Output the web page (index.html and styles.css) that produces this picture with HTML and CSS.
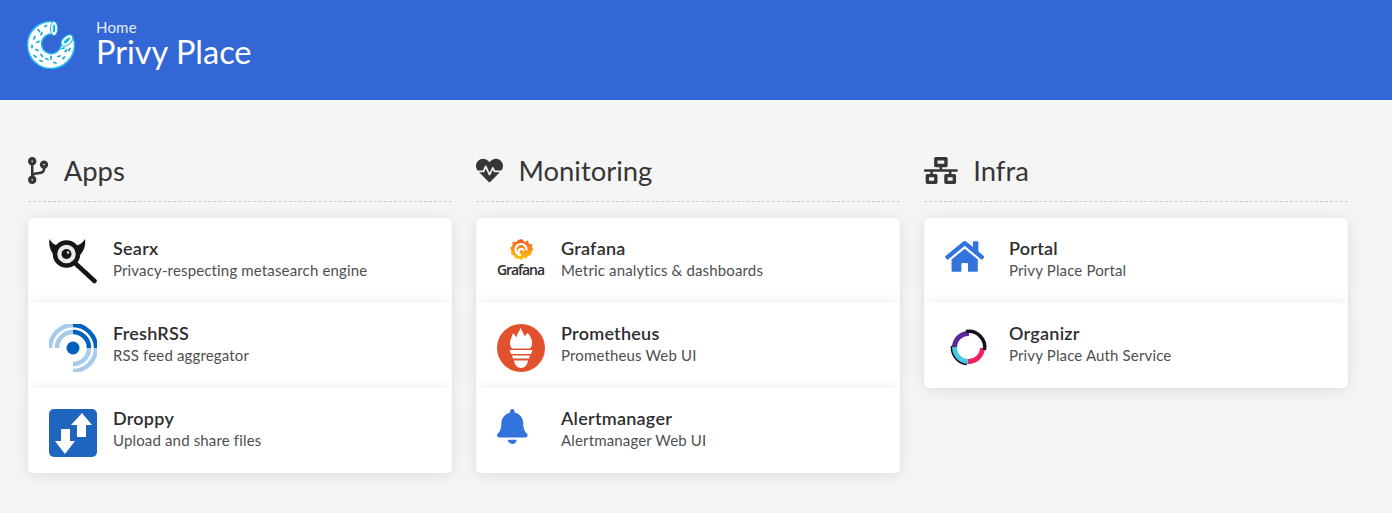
FILE: index.html
```html
<!DOCTYPE html>
<html lang="en">
<head>
<meta charset="utf-8">
<title>Privy Place</title>
<link rel="stylesheet" href="styles.css">
</head>
<body>
<header class="hero">
  <svg class="logo" viewBox="0 0 48 48">
    <path class="donut-body" d="M27 1.200A23.500 23.500 0 1 0 46.500 18L34 25A9.800 9.800 0 1 1 27 14Z"/>
    <ellipse class="donut-end" cx="27" cy="8" rx="3.600" ry="7"/>
    <ellipse class="donut-hole" cx="27" cy="8" rx="1.300" ry="4"/>
    <ellipse class="donut-end" cx="40" cy="20" rx="7" ry="4.200" transform="rotate(-42 40 20)"/>
    <ellipse class="donut-hole" cx="40" cy="20" rx="4" ry="1.600" transform="rotate(-42 40 20)"/>
    <path class="sprinkles" d="M18 6l1.500-1M11 9l1.500 2M15 12l-1 2M8 16l-1 2.500M12 21l-2 1M5 25l0 2M9 29l2 1M7 35l2 1.500M14 34l1.500 2M13 40l2 1M19 38l2 1M24 36l0 2.500M27 42l2 .5M31 36l2-.5M36 38l1.500-1.500M38 31l2-1.500M43 28l-1 2M35 28l2-.5"/>
  </svg>
  <div class="brand">
    <p class="brand-sub">Home</p>
    <h1 class="brand-title">Privy Place</h1>
  </div>
</header>
<main class="board">
  <section class="column">
    <h2 class="group-title">
      <svg class="group-icon" viewBox="0 0 384 512"><path d="M384 144c0-44.2-35.8-80-80-80s-80 35.8-80 80c0 36.4 24.3 67.1 57.5 76.8-.6 16.1-4.2 28.5-11 36.9-15.4 19.2-49.3 22.4-85.2 25.7-28.2 2.6-57.4 5.4-81.3 16.9v-144c32.5-10.2 56-40.5 56-76.3 0-44.2-35.8-80-80-80S0 35.8 0 80c0 35.8 23.5 66.1 56 76.3v199.3C23.5 365.9 0 396.2 0 432c0 44.2 35.8 80 80 80s80-35.8 80-80c0-34-21.2-63.1-51.2-74.6 3.1-5.2 7.8-9.8 14.9-13.4 16.2-8.2 40.4-10.4 66.1-12.8 42.2-3.9 90-8.4 118.2-43.4 14-17.4 21.1-39.8 21.6-67.9 31.6-10.800 54.4-40.7 54.4-75.9zM80 64c8.8 0 16 7.2 16 16s-7.2 16-16 16-16-7.2-16-16 7.2-16 16-16zm0 384c-8.8 0-16-7.2-16-16s7.2-16 16-16 16 7.2 16 16-7.2 16-16 16zm224-320c8.8 0 16 7.2 16 16s-7.2 16-16 16-16-7.2-16-16 7.2-16 16-16z"/></svg>
      <span>Apps</span>
    </h2>
    <a class="card">
      <svg class="thumb" viewBox="0 0 48 48">
        <path class="ink" d="M0.500 0C-0.500 6 1 12 5 16L12 7C6 7 3 4 0.500 0ZM36 0C37 6 35 12 31 16L24 7C30 7 33.500 4 36 0Z"/>
        <circle class="searx-ring" cx="17.500" cy="15" r="11.500"/>
        <circle class="ink" cx="17.500" cy="15" r="5"/>
        <circle class="searx-glint" cx="19" cy="13.500" r="1.300"/>
        <path class="searx-handle" d="M27 25L45.500 42"/>
      </svg>
      <div class="info"><p class="name">Searx</p><p class="desc">Privacy-respecting metasearch engine</p></div>
    </a>
    <a class="card">
      <svg class="thumb" viewBox="0 0 48 48">
        <path class="rss-light" d="M24 8A16 16 0 0 0 8 24M24 1A23 23 0 0 0 1 24M40 24A16 16 0 0 1 24 40M47 24A23 23 0 0 1 24 47"/>
        <path class="rss-dark" d="M24 8A16 16 0 0 1 40 24M24 1A23 23 0 0 1 47 24"/>
        <circle class="rss-dot" cx="24" cy="24" r="6.500"/>
      </svg>
      <div class="info"><p class="name">FreshRSS</p><p class="desc">RSS feed aggregator</p></div>
    </a>
    <a class="card">
      <svg class="thumb" viewBox="0 0 48 48">
        <rect class="droppy-bg" width="48" height="48" rx="5"/>
        <path class="droppy-arrow" d="M33 4L43 16H37V28H28V16H22ZM16 45L6 32H12V20H21V32H26Z"/>
      </svg>
      <div class="info"><p class="name">Droppy</p><p class="desc">Upload and share files</p></div>
    </a>
  </section>
  <section class="column">
    <h2 class="group-title">
      <svg class="group-icon" viewBox="0 0 512 512"><path d="M320.2 243.8l-49.7 99.4c-6 12.1-23.4 11.7-28.9-.6l-56.9-126.3-30 71.7H60.6l182.5 186.5c7.1 7.3 18.6 7.3 25.7 0L451.4 288H342.3l-22.1-44.2zM473.7 73.9l-2.4-2.5c-51.5-52.6-135.8-52.6-187.4 0L256 100l-27.9-28.5c-51.5-52.7-135.9-52.7-187.4 0l-2.4 2.4C-10.4 123.7-12.5 203 31 256h102.4l35.9-86.2c5.4-12.9 23.6-13.2 29.4-.4l58.2 129.3 49-97.9c5.9-11.8 22.7-11.8 28.6 0l27.6 55.2H481c43.5-53 41.4-132.3-7.3-182.1z"/></svg>
      <span>Monitoring</span>
    </h2>
    <a class="card">
      <svg class="thumb" viewBox="0 0 48 48">
        <defs><linearGradient id="gf" x1="0" y1="0" x2="0" y2="1"><stop offset="0" stop-color="#f05a28"/><stop offset="1" stop-color="#fbca0a"/></linearGradient></defs>
        <path fill="url(#gf)" d="M25 0L27.500 3 31 1.500 32 5 35.500 5.500 35 9 36.500 10 34.500 13 34 16 31 17 29.500 19.500 26.500 19 24 21 21 19.500 18 19.500 17 16.500 14 15 14.500 11.500 13 9 15.500 6.500 15.500 3 19 3 21 1Z"/>
        <path class="gf-swirl" d="M29.500 10.500A5.500 5.500 0 1 0 24 16C22 16 20.800 13 22 11 23 9.500 25.500 9.500 26.500 11"/>
        <text class="gf-word" x="24" y="36" textLength="48">Grafana</text>
      </svg>
      <div class="info"><p class="name">Grafana</p><p class="desc">Metric analytics &amp; dashboards</p></div>
    </a>
    <a class="card">
      <svg class="thumb" viewBox="0 0 48 48">
        <circle class="prom-bg" cx="24" cy="24" r="24"/>
        <path class="prom-white" d="M23.700 3.700C24.500 7 26.500 8.500 27.500 12 28.500 11.500 30 10.500 30.500 8.800 33.500 12 35.500 16 35 20 34.700 22 34 23.500 33 24.500H15C13.500 23 13 21 13 19 13 15.500 15 13 16 9.300 17.500 10.500 18.500 11.800 19.500 13.500 20 9.500 22.500 7.500 23.700 3.700ZM12.500 26H35.500L34 30H14ZM15 31.500H33L32 34.500H16ZM17 36.500H31C30.500 41 27.500 44 24 44 20.500 44 17.500 41 17 36.500Z"/>
      </svg>
      <div class="info"><p class="name">Prometheus</p><p class="desc">Prometheus Web UI</p></div>
    </a>
    <a class="card">
      <span class="glyph-box"><svg class="glyph" viewBox="0 0 448 512"><path d="M224 512c35.320 0 63.970-28.650 63.970-64H160.030c0 35.350 28.650 64 63.970 64zm215.390-149.710c-19.320-20.760-55.470-51.990-55.470-154.290 0-77.700-54.480-139.900-127.940-155.160V32c0-17.670-14.320-32-31.980-32s-31.980 14.330-31.980 32v20.840C118.560 68.100 64.080 130.300 64.080 208c0 102.300-36.150 133.530-55.470 154.290-6 6.450-8.660 14.160-8.610 21.710.11 16.400 12.980 32 32.100 32h383.800c19.120 0 32-15.600 32.100-32 .05-7.550-2.610-15.270-8.610-21.710z"/></svg></span>
      <div class="info"><p class="name">Alertmanager</p><p class="desc">Alertmanager Web UI</p></div>
    </a>
  </section>
  <section class="column">
    <h2 class="group-title">
      <svg class="group-icon" viewBox="0 0 640 512"><path d="M640 264v-16c0-8.840-7.160-16-16-16H344v-40h72c17.670 0 32-14.330 32-32V32c0-17.670-14.330-32-32-32H224c-17.670 0-32 14.330-32 32v128c0 17.670 14.330 32 32 32h72v40H16c-8.840 0-16 7.160-16 16v16c0 8.840 7.160 16 16 16h104v40H64c-17.670 0-32 14.330-32 32v128c0 17.670 14.330 32 32 32h160c17.670 0 32-14.330 32-32V352c0-17.670-14.330-32-32-32h-56v-40h304v40h-56c-17.670 0-32 14.330-32 32v128c0 17.670 14.330 32 32 32h160c17.670 0 32-14.330 32-32V352c0-17.670-14.330-32-32-32h-56v-40h104c8.840 0 16-7.160 16-16zM256 128V64h128v64H256zm-64 320H96v-64h96v64zm352 0h-96v-64h96v64z"/></svg>
      <span>Infra</span>
    </h2>
    <a class="card">
      <span class="glyph-box"><svg class="glyph" viewBox="0 0 576 512"><path d="M280.370 148.260L96 300.110V464a16 16 0 0 0 16 16l112.060-.29a16 16 0 0 0 15.920-16V368a16 16 0 0 1 16-16h64a16 16 0 0 1 16 16v95.640a16 16 0 0 0 16 16.050L464 480a16 16 0 0 0 16-16V300L295.670 148.260a12.190 12.190 0 0 0-15.300 0zM571.600 251.470L488 182.560V44.050a12 12 0 0 0-12-12h-56a12 12 0 0 0-12 12v72.610L318.470 43a48 48 0 0 0-61 0L4.340 251.470a12 12 0 0 0-1.600 16.900l25.500 31A12 12 0 0 0 45.150 301l235.220-193.740a12.190 12.190 0 0 1 15.300 0L530.900 301a12 12 0 0 0 16.900-1.600l25.500-31a12 12 0 0 0-1.700-16.930z"/></svg></span>
      <div class="info"><p class="name">Portal</p><p class="desc">Privy Place Portal</p></div>
    </a>
    <a class="card">
      <svg class="thumb" viewBox="0 0 48 48">
        <path class="org-purple" d="M9.500 24A14 14 0 0 1 24 9.500"/>
        <path class="org-cyan" d="M23.500 37.500A14 14 0 0 1 9.500 23"/>
        <path class="org-red" d="M37.500 24A14 14 0 0 1 23 37.500"/>
        <path class="org-black" d="M21 7.500A16 16 0 0 1 39.500 26"/>
        <path class="org-thin" d="M6.500 22A17 17 0 0 0 22 40.500"/>
      </svg>
      <div class="info"><p class="name">Organizr</p><p class="desc">Privy Place Auth Service</p></div>
    </a>
  </section>
</main>
</body>
</html>
```
FILE: styles.css
```css
* { box-sizing: border-box; }
html, body { margin: 0; padding: 0; }
body {
  background: #f5f5f5;
  color: #363636;
  font-family: "Lato", "Liberation Sans", sans-serif;
  height: 513px;
  overflow: hidden;
}
p, h1, h2 { margin: 0; font-weight: 400; }

.hero {
  height: 100px;
  background: #3367d6;
  color: #fff;
  display: flex;
  align-items: flex-start;
  padding: 20px 0 0 27px;
  gap: 21px;
}
.logo { width: 48px; height: 49px; flex: none; }
.donut-body { fill: #fff; stroke: #22b8ea; stroke-width: 1.500; stroke-linejoin: round; }
.donut-end { fill: #fff; stroke: #22b8ea; stroke-width: 1; }
.donut-hole { fill: #22b8ea; }
.sprinkles { fill: none; stroke: #1ba7df; stroke-width: 1.800; stroke-linecap: round; }
.brand { display: flex; flex-direction: column; margin-top: -1px; }
.brand-sub { font-size: 15px; line-height: 17px; letter-spacing: .2px; opacity: .88; }
.brand-title { font-size: 32.500px; line-height: 32px; }

.board {
  display: grid;
  grid-template-columns: repeat(3, 424px);
  gap: 24px;
  padding: 0 0 0 28px;
}
.group-title {
  display: flex;
  align-items: center;
  height: 52px;
  margin-top: 50px;
  margin-bottom: 16px;
  padding-bottom: 10px;
  border-bottom: 1px dashed #ccc;
  font-size: 27.400px;
  gap: 15.500px;
}
.group-icon { height: 27px; width: auto; fill: #363636; flex: none; }

.card {
  display: flex;
  align-items: center;
  height: 85px;
  padding: 0 21px;
  background: #fff;
  box-shadow: 0 2px 15px rgba(0, 0, 0, .1);
  position: relative;
  gap: 16px;
}
.group-title + .card { border-radius: 5px 5px 0 0; }
.card:last-child { border-radius: 0 0 5px 5px; }
.thumb { width: 48px; height: 48px; flex: none; margin-top: 5px; }
.glyph-box { width: 48px; flex: none; display: flex; margin-bottom: 8px; }
.glyph { height: 35px; width: auto; fill: #3273dc; }
.info { display: flex; flex-direction: column; padding-bottom: 4px; }
.name { font-size: 18px; line-height: 22px; font-weight: 600; letter-spacing: .25px; color: #2e2e2e; }
.desc { font-size: 15px; line-height: 22px; letter-spacing: .15px; color: #4f4f4f; }

.ink { fill: #161616; }
.searx-ring { fill: #ececec; stroke: #161616; stroke-width: 4.500; }
.searx-glint { fill: #ddd; }
.searx-handle { stroke: #161616; stroke-width: 4.500; stroke-linecap: round; fill: none; }
.rss-light { fill: none; stroke: #a8cbeb; stroke-width: 4.500; }
.rss-dark { fill: none; stroke: #0062be; stroke-width: 4.500; }
.rss-dot { fill: #0062be; }
.droppy-bg { fill: #1f65bd; }
.droppy-arrow { fill: #fff; }
.gf-swirl { fill: none; stroke: #fff; stroke-width: 2.200; stroke-linecap: round; }
.gf-word { font-family: "Open Sans", sans-serif; font-size: 14px; font-weight: 600; fill: #2b2b2b; text-anchor: middle; }
.prom-bg { fill: #e1512f; }
.prom-white { fill: #fff; }
.org-black, .org-red, .org-cyan, .org-purple { fill: none; stroke-width: 5; }
.org-black { stroke: #14101f; stroke-width: 3.500; }
.org-red { stroke: #f0215f; }
.org-cyan { stroke: #46c8e6; }
.org-purple { stroke: #5a2a9c; }
.org-thin { fill: none; stroke: #14101f; stroke-width: 1.500; }
```
